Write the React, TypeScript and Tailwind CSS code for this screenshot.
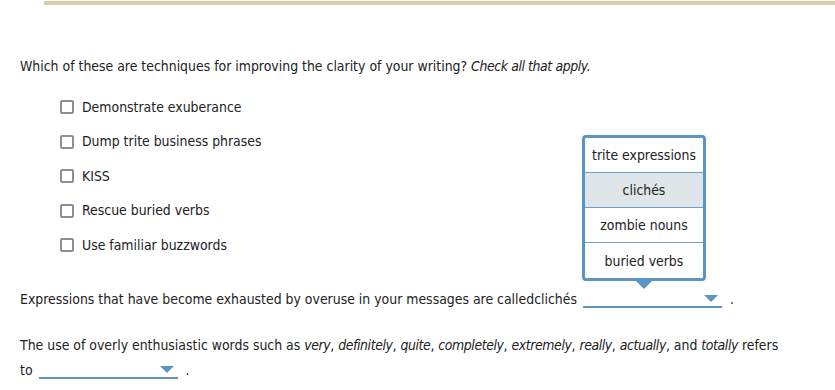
import React from 'react'

const options = [
  'Demonstrate exuberance',
  'Dump trite business phrases',
  'KISS',
  'Rescue buried verbs',
  'Use familiar buzzwords',
]

const choices = ['trite expressions', 'clichés', 'zombie nouns', 'buried verbs']

function Arrow() {
  return (
    <span className="absolute right-[4px] top-[6px] w-0 h-0 border-l-[7px] border-r-[7px] border-t-[7px] border-l-transparent border-r-transparent border-t-[#5a95c6]" />
  )
}

function Dropdown({ open }: { open?: boolean }) {
  return (
    <span className="relative inline-block align-[-4px] w-[139px] h-[19px] border-b-[2px] border-[#5a95c6] ml-[6px] mr-[8px]">
      <Arrow />
      {open && (
        <span className="absolute left-[-1px] bottom-[calc(100%+8px)] w-[124px] border-[3px] border-[#5a95c6] rounded-[4px] bg-white flex flex-col">
          {choices.map((c, i) => (
            <span
              key={c}
              className={
                'h-[35px] flex items-center justify-center ' +
                (i < choices.length - 1 ? 'border-b border-[#6fa0cc] ' : '') +
                (c === 'clichés' ? 'bg-[#dfe6e9]' : '')
              }
            >
              {c}
            </span>
          ))}
          <span className="absolute left-1/2 -translate-x-1/2 top-[calc(100%+3px)] w-0 h-0 border-l-[8px] border-r-[8px] border-t-[8px] border-l-transparent border-r-transparent border-t-[#5a95c6]" />
        </span>
      )}
    </span>
  )
}

function Em({ children }: { children: React.ReactNode }) {
  return <i className="tracking-[-0.4px]">{children}</i>
}

export default function App() {
  return (
    <div className="min-h-screen bg-white text-[#222] font-['DejaVu_Sans_Condensed','DejaVu_Sans',sans-serif] text-[13.9px]">
      <div className="ml-[44px] mt-[1px] h-[4px] bg-[#d9cda3]" />
      <div className="px-[20px]">
        <p className="mt-[51px] leading-[20px]">
          Which of these are techniques for improving the clarity of your writing? <Em>Check all that apply.</Em>
        </p>

        <div className="mt-[21px] ml-[40px] flex flex-col gap-[14.5px]">
          {options.map((o) => (
            <label key={o} className="h-[20px] flex items-center gap-[8px]">
              <span className="w-[14px] h-[14px] border-2 border-[#8d8d9b] rounded-[2px] bg-white" />
              <span>{o}</span>
            </label>
          ))}
        </div>

        <p className="mt-[34px] leading-[20px]">
          Expressions that have become exhausted by overuse in your messages are calledclichés
          <Dropdown open />.
        </p>

        <p className="mt-[24px] leading-[25px] max-w-[770px]">
          The use of overly enthusiastic words such as <Em>very</Em>, <Em>definitely</Em>, <Em>quite</Em>,{' '}
          <Em>completely</Em>, <Em>extremely</Em>, <Em>really</Em>, <Em>actually</Em>, and <Em>totally</Em> refers to
          <Dropdown />.
        </p>
      </div>
    </div>
  )
}
